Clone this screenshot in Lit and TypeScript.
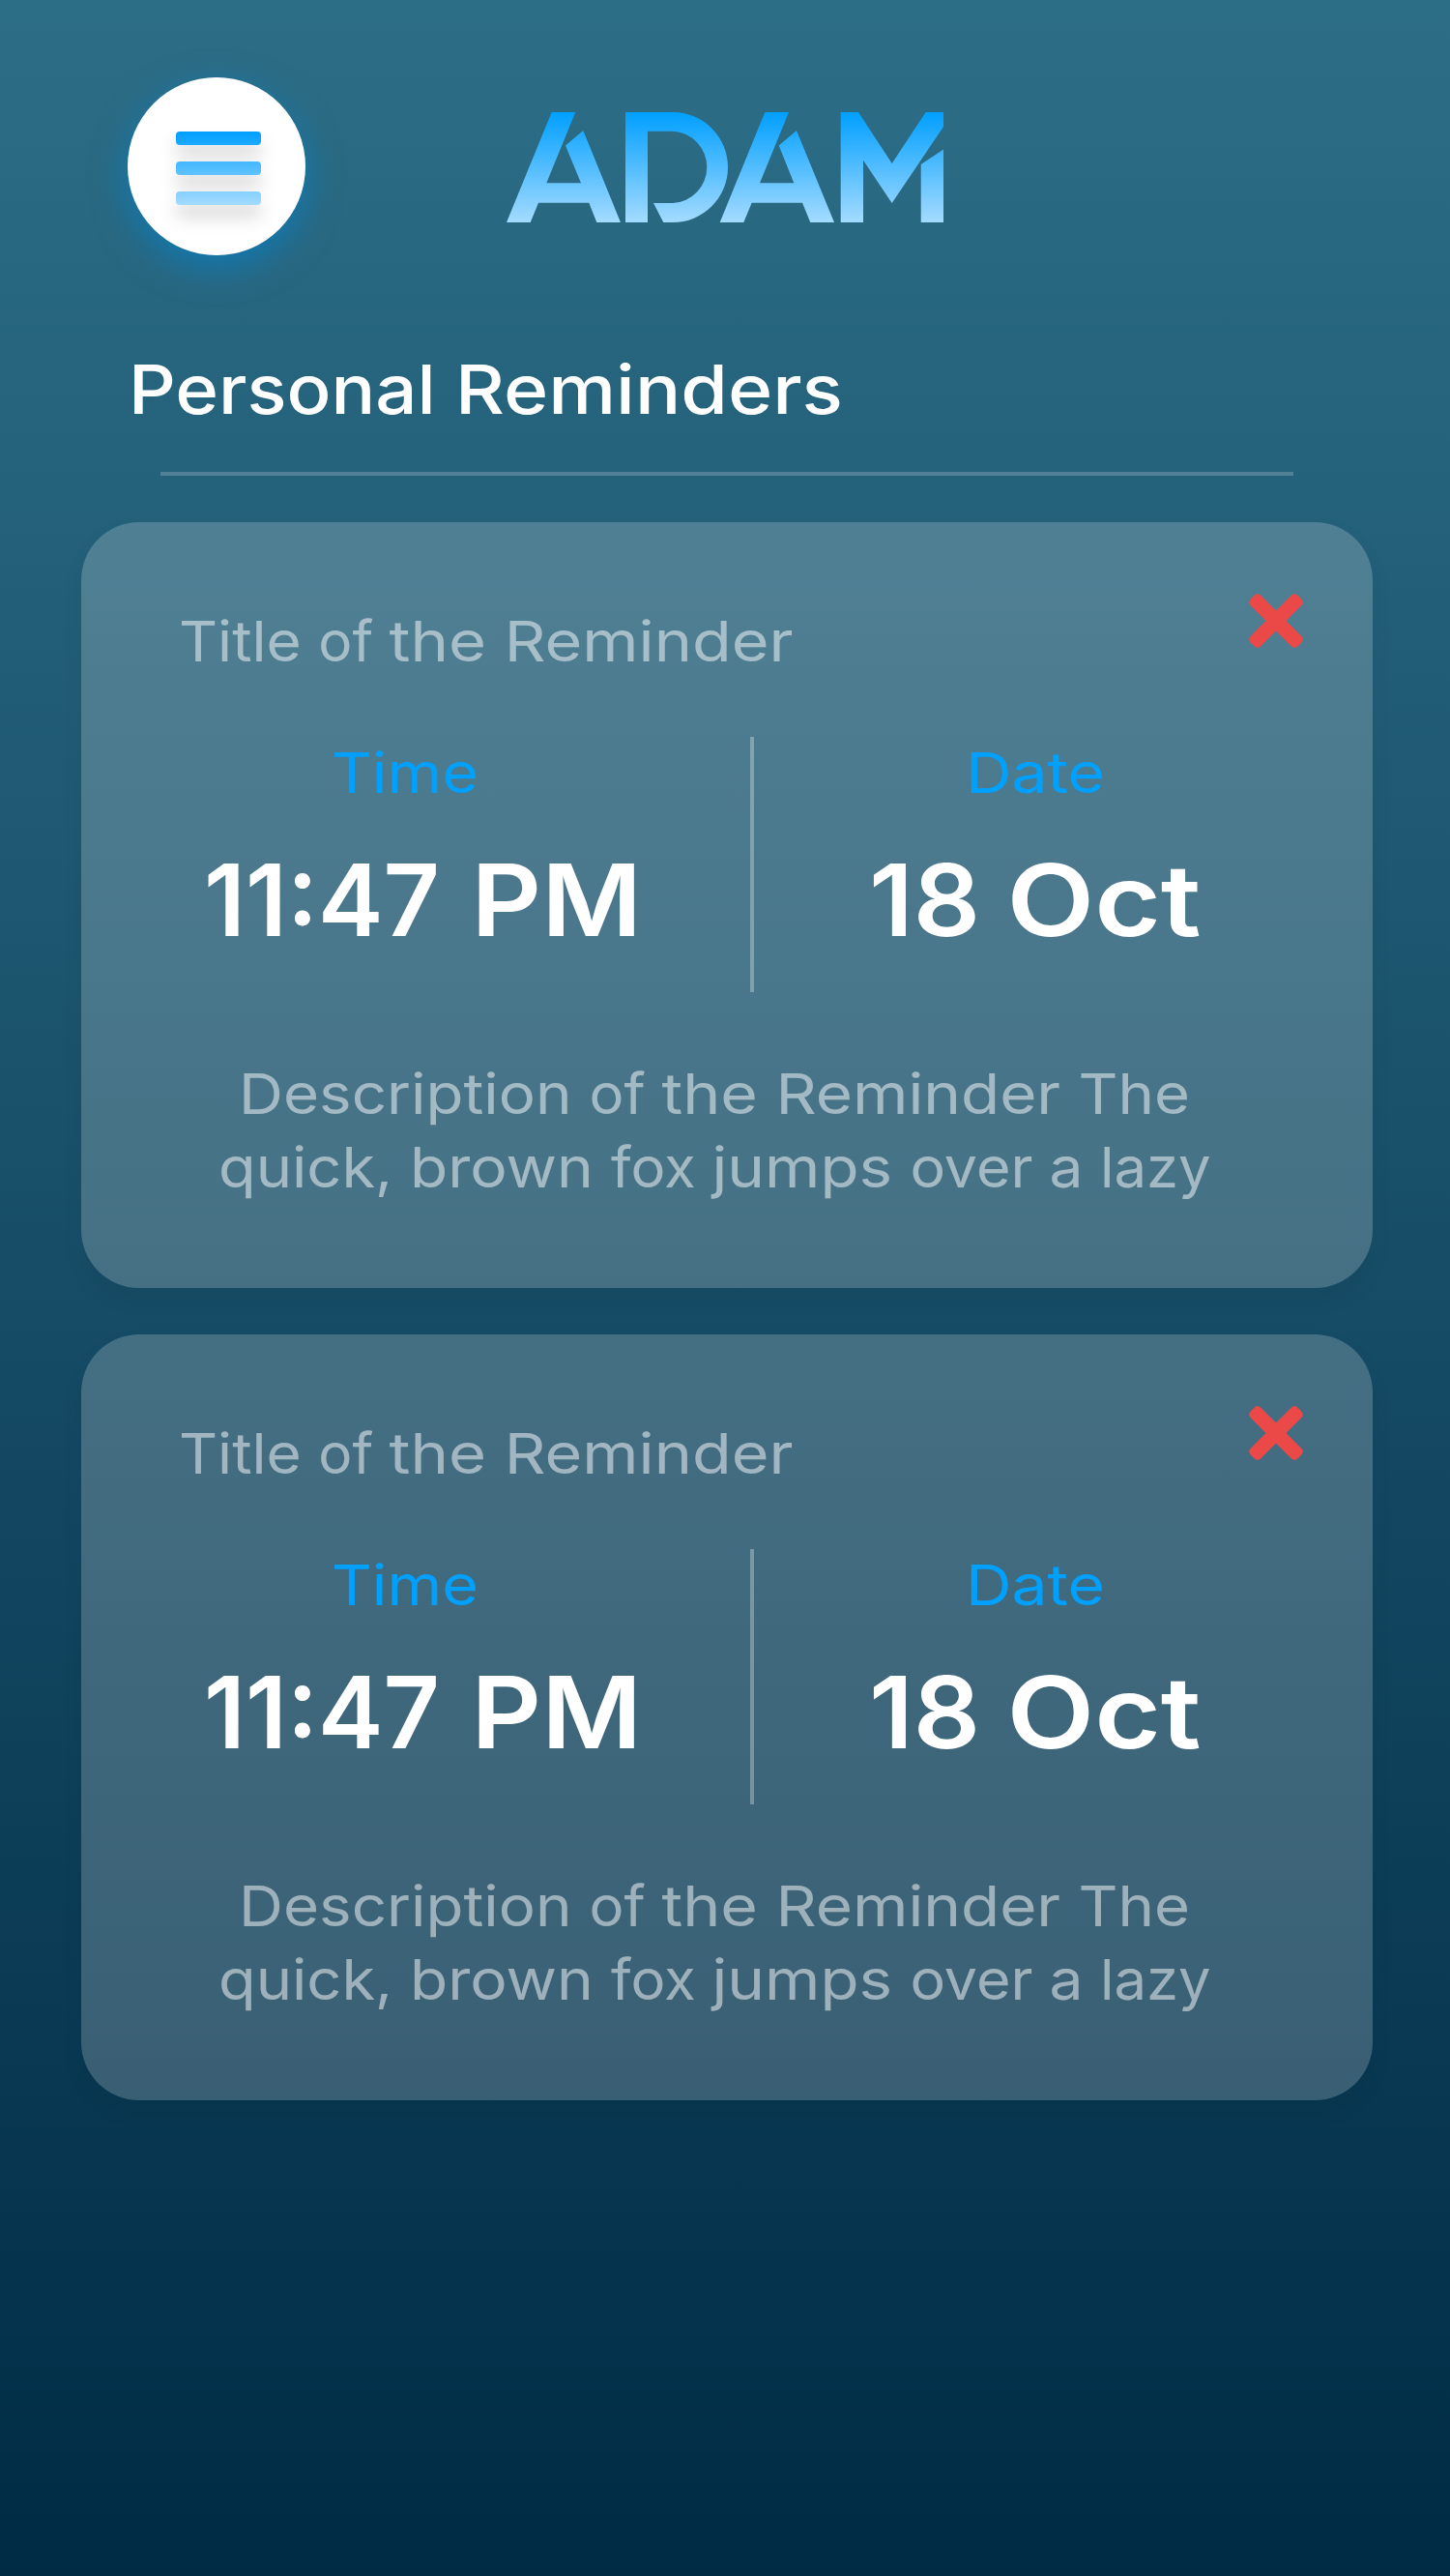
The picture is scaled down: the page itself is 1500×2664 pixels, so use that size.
import { LitElement, html, svg, css } from "lit";
import { customElement, property } from "lit/decorators.js";

/** A word and the advance it takes up, its trailing space included. */
type Word = [text: string, advance: number];

/** One line of text whose words have fixed advances, so that lines keep their measure. */
@customElement("fit-line")
class FitLine extends LitElement {
  @property({ type: Array }) words: Word[] = [];
  @property({ type: Number }) height = 80;
  @property({ type: Number }) baseline = 60;
  static styles = css`
    :host { display: block; flex: none; }
    .line { display: block; overflow: visible; }
    .glyphs { fill: currentColor; white-space: pre; }
  `;
  render() {
    const total = this.words.reduce((sum, [, advance]) => sum + advance, 0);
    const last = this.words.length - 1;
    let x = 0;
    const spans = this.words.map(([text, advance], i) => {
      const start = x;
      x += advance;
      return svg`<tspan x=${start} textLength=${advance} lengthAdjust="spacingAndGlyphs">${i < last ? text + " " : text}</tspan>`;
    });
    return html`<svg class="line" width=${total} height=${this.height}><text class="glyphs" y=${this.baseline}>${spans}</text></svg>`;
  }
}

interface Reminder {
  heading: Word[];
  time: Word[];
  date: Word[];
  description: Word[][];
}

@customElement("reminder-card")
class ReminderCard extends LitElement {
  @property({ attribute: false }) reminder!: Reminder;
  static styles = css`
    :host { display: block; }
    .card {
      box-sizing: border-box;
      height: 792px;
      border-radius: 60px;
      background: rgba(255, 255, 255, 0.2);
      box-shadow: 0 12px 24px rgba(0, 0, 0, 0.05);
      color: rgba(255, 255, 255, 0.5);
      font-size: 57.8px;
      font-weight: 380;
    }
    .top {
      display: flex;
      justify-content: space-between;
      align-items: flex-start;
      height: 222px;
      box-sizing: border-box;
      padding: 74px 72px 0 100.5px;
    }
    .close { display: block; }
    .stats {
      display: grid;
      grid-template-columns: 692px 4px 640px;
      height: 264px;
    }
    .rule { background: rgba(255, 255, 255, 0.3); }
    .stat { display: flex; flex-direction: column; align-items: center; }
    .stat.left { padding-left: 15px; }
    .stat.right { padding-right: 59px; }
    .label { color: #00a0ff; }
    .left .label { padding-right: 38px; }
    .right .label { padding-left: 1px; }
    .value { color: #fff; font-size: 103px; font-weight: 630; }
    .left .value { word-spacing: 7px; }
    .body {
      display: flex;
      flex-direction: column;
      align-items: center;
      padding: 68px 26px 0 0;
    }
  `;
  render() {
    const { heading, time, date, description } = this.reminder;
    return html`<article class="card">
      <div class="top">
        <fit-line .words=${heading} height="84" baseline="70"></fit-line>
        <svg class="close" width="56" height="56" viewBox="0 0 56 56">
          <g fill="#eb4848">
            <rect x="-6.5" y="20.6" width="69" height="14.8" rx="4.5" transform="rotate(45 28 28)"/>
            <rect x="-6.5" y="20.6" width="69" height="14.8" rx="4.5" transform="rotate(-45 28 28)"/>
          </g>
        </svg>
      </div>
      <div class="stats">
        <div class="stat left">
          <fit-line class="label" .words=${[["Time", 152]]} height="84" baseline="58"></fit-line>
          <fit-line class="value" .words=${time} height="150" baseline="122"></fit-line>
        </div>
        <div class="rule"></div>
        <div class="stat right">
          <fit-line class="label" .words=${[["Date", 144]]} height="84" baseline="58"></fit-line>
          <fit-line class="value" .words=${date} height="150" baseline="122"></fit-line>
        </div>
      </div>
      <div class="body">
        ${description.map((line) => html`<fit-line .words=${line} height="76" baseline="58"></fit-line>`)}
      </div>
    </article>`;
  }
}

const letterA = svg`<path d="M46.7 0H71.3L41.3 73.3H77L61 34.5L79.3 19L118 114H93.3L85.3 93.7H33L24.7 114H0Z"/>`;

@customElement("app-root")
class AppRoot extends LitElement {
  static styles = css`
    :host { display: block; }
    .page {
      box-sizing: border-box;
      width: 1500px;
      height: 2664px;
      overflow: hidden;
      background: linear-gradient(180deg, #2d6e87 0%, #002b45 100%);
      font-family: Inter, "Open Sans", sans-serif;
      color: #fff;
    }
    .header {
      display: flex;
      align-items: center;
      gap: 208px;
      padding: 80px 0 0 132px;
      height: 184px;
    }
    .menu {
      display: flex;
      align-items: center;
      justify-content: center;
      width: 184px;
      height: 184px;
      padding: 4px 0 0 4px;
      box-sizing: border-box;
      border-radius: 50%;
      background: #fff;
      box-shadow: 0 12px 36px rgba(0, 133, 212, 0.6);
    }
    .bars { overflow: visible; filter: drop-shadow(0 12px 9px rgba(0, 0, 0, 0.16)); }
    .logo { display: block; padding-top: 2px; }
    .heading { font-size: 70px; font-weight: 500; margin: 0; padding: 84px 0 0 133px; height: 140px; }
    .separator { width: 1172px; height: 4px; margin-left: 166px; background: rgba(255, 255, 255, 0.2); }
    .list { display: grid; gap: 48px; padding: 48px 80px 0 84px; }
  `;
  private headline: Word[] = [["Personal", 338], ["Reminders", 401]];
  private reminders: Reminder[] = [1, 2].map(() => ({
    heading: [["Title", 144.3], ["of", 73.2], ["the", 119.3], ["Reminder", 298.7]],
    time: [["11:47", 276.5], ["PM", 176.5]],
    date: [["18", 142.5], ["Oct", 201]],
    description: [
      [["Description", 362.5], ["of", 75], ["the", 118], ["Reminder", 313], ["The", 115.5]],
      [["quick,", 198], ["brown", 208], ["fox", 104.5], ["jumps", 205], ["over", 144], ["a", 52.5], ["lazy", 114.5]],
    ],
  }));
  render() {
    return html`<main class="page">
      <header class="header">
        <div class="menu">
          <svg class="bars" width="88" height="76" viewBox="0 0 88 76">
            <defs><linearGradient id="b" gradientUnits="userSpaceOnUse" x1="0" y1="0" x2="0" y2="76">
              <stop stop-color="#009fff"/><stop offset="1" stop-color="#a4dbff"/>
            </linearGradient></defs>
            <g fill="url(#b)">
              <rect width="88" height="14" rx="4"/><rect y="31" width="88" height="14" rx="4"/><rect y="62" width="88" height="14" rx="4"/>
            </g>
          </svg>
        </div>
        <svg class="logo" width="452" height="114" viewBox="0 0 452 114" role="img" aria-label="ADAM">
          <defs><linearGradient id="g" gradientUnits="userSpaceOnUse" x1="0" y1="0" x2="0" y2="114">
            <stop stop-color="#009fff"/><stop offset="1" stop-color="#a4dbff"/>
          </linearGradient></defs>
          <g fill="url(#g)">
            ${letterA}
            <path d="M123 0H172A57 57 0 0 1 172 114H162.3L152 94H172A37.2 37.2 0 0 0 172 19.7H146V114H123Z"/>
            <path d="M267.3 0H292L262 73.3H297.3L281.7 34.5L300 19L339 114H314.3L306 93.7H253.7L245.3 114H220.7Z"/>
            <path d="M345.7 0H364L398.7 53L433.7 0H452V15L398.7 94L369 49.7V114H345.7Z"/>
            <path d="M428.7 54L452 38.5V114H428.7Z"/>
          </g>
        </svg>
      </header>
      <h1 class="heading"><fit-line .words=${this.headline} height="100" baseline="80"></fit-line></h1>
      <div class="separator"></div>
      <section class="list">
        ${this.reminders.map((r) => html`<reminder-card .reminder=${r}></reminder-card>`)}
      </section>
    </main>`;
  }
}
